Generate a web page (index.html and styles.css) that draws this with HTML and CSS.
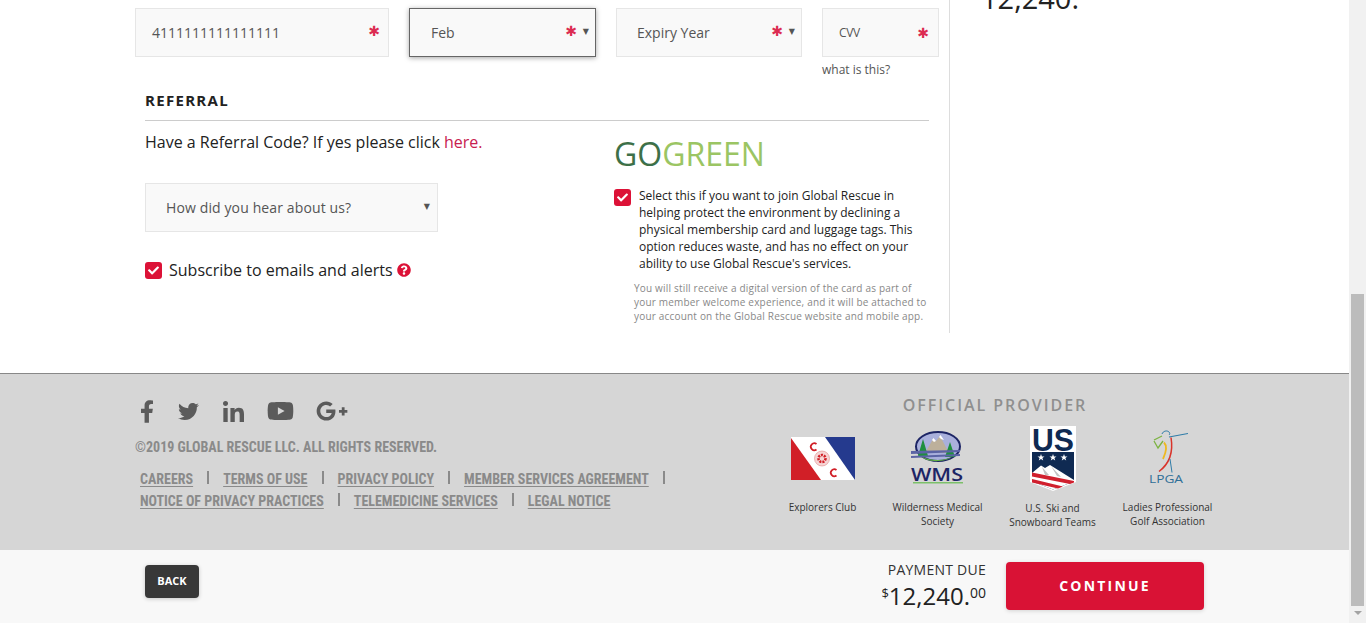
FILE: index.html
```html
<!DOCTYPE html>
<html lang="en">
<head>
<meta charset="utf-8">
<title>Payment</title>
<link rel="stylesheet" href="styles.css">
</head>
<body>
<div class="window">
  <div class="page">
    <main class="main">
      <section class="form-col">
        <div class="card-row">
          <div class="field field-card"><span class="value">4111111111111111</span><span class="star">✱</span></div>
          <div class="field field-month focused"><span class="value">Feb</span><span class="star">✱</span><span class="caret">▼</span></div>
          <div class="field field-year"><span class="value">Expiry Year</span><span class="star">✱</span><span class="caret">▼</span></div>
          <div class="cvv-wrap">
            <div class="field field-cvv"><span class="value cvv-text">CVV</span><span class="star">✱</span></div>
            <a class="what">what is this?</a>
          </div>
        </div>
        <div class="referral">
          <h2 class="section-title">REFERRAL</h2>
          <div class="referral-cols">
            <div class="ref-left">
              <p class="ref-text">Have a Referral Code? If yes please click <a class="here">here.</a></p>
              <div class="field field-hear"><span class="value">How did you hear about us?</span><span class="caret">▼</span></div>
              <div class="subscribe">
                <span class="check"><svg viewBox="0 0 512 512"><path d="M173.898 439.404l-166.4-166.4c-9.997-9.997-9.997-26.206 0-36.204l36.203-36.204c9.997-9.998 26.207-9.998 36.204 0L192 312.69 432.095 72.596c9.997-9.997 26.207-9.997 36.204 0l36.203 36.204c9.997 9.997 9.997 26.206 0 36.204l-294.4 294.401c-9.998 9.997-26.207 9.997-36.204-.001z"/></svg></span>
                <span class="sub-label">Subscribe to emails and alerts</span>
                <svg class="help" viewBox="0 0 512 512"><path d="M504 256c0 136.997-111.043 248-248 248S8 392.997 8 256C8 119.083 119.043 8 256 8s248 111.083 248 248zM262.655 90c-54.497 0-89.255 22.957-116.549 63.758-3.536 5.286-2.353 12.415 2.715 16.258l34.699 26.31c5.205 3.947 12.621 3.008 16.665-2.122 17.864-22.658 30.113-35.797 57.303-35.797 20.429 0 45.698 13.148 45.698 32.958 0 14.976-12.363 22.667-32.534 33.976C247.128 238.528 216 254.941 216 296v4c0 6.627 5.373 12 12 12h56c6.627 0 12-5.373 12-12v-1.333c0-28.462 83.186-29.647 83.186-106.667 0-58.002-60.165-102-116.531-102zM256 338c-25.365 0-46 20.635-46 46 0 25.364 20.635 46 46 46s46-20.636 46-46c0-25.365-20.635-46-46-46z"/></svg>
              </div>
            </div>
            <div class="ref-right">
              <div class="gogreen"><span class="go">GO</span><span class="green">GREEN</span></div>
              <div class="green-check">
                <span class="check"><svg viewBox="0 0 512 512"><path d="M173.898 439.404l-166.4-166.4c-9.997-9.997-9.997-26.206 0-36.204l36.203-36.204c9.997-9.998 26.207-9.998 36.204 0L192 312.69 432.095 72.596c9.997-9.997 26.207-9.997 36.204 0l36.203 36.204c9.997 9.997 9.997 26.206 0 36.204l-294.4 294.401c-9.998 9.997-26.207 9.997-36.204-.001z"/></svg></span>
                <p class="green-text">Select this if you want to join Global Rescue in helping protect the environment by declining a physical membership card and luggage tags. This option reduces waste, and has no effect on your ability to use Global Rescue's services.</p>
              </div>
              <p class="green-note">You will still receive a digital version of the card as part of your member welcome experience, and it will be attached to your account on the Global Rescue website and mobile app.</p>
            </div>
          </div>
        </div>
      </section>
      <aside class="summary"><div class="summary-total">12,240.</div></aside>
    </main>

    <footer class="footer">
      <div class="foot-left">
        <div class="social">
          <svg class="s-f" viewBox="0 0 320 512"><path d="M279.14 288l14.22-92.66h-88.91v-60.13c0-25.35 12.42-50.06 52.24-50.06h40.42V6.26S260.43 0 225.36 0c-73.22 0-121.08 44.38-121.08 124.72v70.62H22.89V288h81.39v224h100.17V288z"/></svg>
          <svg class="s-t" viewBox="0 0 512 512"><path d="M459.37 151.716c.325 4.548.325 9.097.325 13.645 0 138.72-105.583 298.558-298.558 298.558-59.452 0-114.68-17.219-161.137-47.106 8.447.974 16.568 1.299 25.34 1.299 49.055 0 94.213-16.568 130.274-44.832-46.132-.975-84.792-31.188-98.112-72.772 6.498.974 12.995 1.624 19.818 1.624 9.421 0 18.843-1.3 27.614-3.573-48.081-9.747-84.143-51.98-84.143-102.985v-1.299c13.969 7.797 30.214 12.67 47.431 13.319-28.264-18.843-46.781-51.005-46.781-87.391 0-19.492 5.197-37.36 14.294-52.954 51.655 63.675 129.3 105.258 216.365 109.807-1.624-7.797-2.599-15.918-2.599-24.04 0-57.828 46.782-104.934 104.934-104.934 30.213 0 57.502 12.67 76.67 33.137 23.715-4.548 46.456-13.32 66.599-25.34-7.798 24.366-24.366 44.833-46.132 57.827 21.117-2.273 41.584-8.122 60.426-16.243-14.292 20.791-32.161 39.308-52.628 54.253z"/></svg>
          <svg class="s-l" viewBox="0 0 448 448"><path d="M100.28 448H7.4V148.9h92.88zM53.79 108.1C24.09 108.1 0 83.5 0 53.8a53.79 53.79 0 0 1 107.58 0c0 29.7-24.1 54.3-53.79 54.3zM447.9 448h-92.68V302.4c0-34.7-.7-79.2-48.29-79.2-48.29 0-55.69 37.7-55.69 76.7V448h-92.78V148.9h89.08v40.8h1.3c12.4-23.5 42.69-48.3 87.88-48.3 94 0 111.28 61.9 111.28 142.3V448z"/></svg>
          <svg class="s-y" viewBox="0 0 576 512"><path d="M549.655 124.083c-6.281-23.65-24.787-42.276-48.284-48.597C458.781 64 288 64 288 64S117.22 64 74.629 75.486c-23.497 6.322-42.003 24.947-48.284 48.597-11.412 42.867-11.412 132.305-11.412 132.305s0 89.438 11.412 132.305c6.281 23.65 24.787 41.5 48.284 47.821C117.22 448 288 448 288 448s170.78 0 213.371-11.486c23.497-6.321 42.003-24.171 48.284-47.821 11.412-42.867 11.412-132.305 11.412-132.305s0-89.438-11.412-132.305zm-317.51 213.508V175.185l142.739 81.205-142.739 81.201z"/></svg>
          <svg class="s-g" viewBox="0 0 640 512"><path d="M386.061 228.496c1.834 9.692 3.143 19.384 3.143 31.956C389.204 370.205 315.599 448 204.8 448c-106.084 0-192-85.915-192-192s85.916-192 192-192c51.864 0 95.083 18.859 128.611 50.292l-52.126 50.03c-14.145-13.621-39.028-29.599-76.485-29.599-65.484 0-118.92 54.221-118.92 121.277 0 67.056 53.436 121.277 118.92 121.277 75.961 0 104.513-54.745 108.965-82.773H204.8v-66.009h181.261zm185.406 6.437V179.2h-56.001v55.733h-55.733v56.001h55.733v55.733h56.001v-55.733H627.2v-56.001h-55.733z"/></svg>
        </div>
        <p class="copyright">©2019 GLOBAL RESCUE LLC. ALL RIGHTS RESERVED.</p>
        <ul class="foot-links">
          <li><a>CAREERS</a></li><li><a>TERMS OF USE</a></li><li><a>PRIVACY POLICY</a></li><li><a>MEMBER SERVICES AGREEMENT</a></li><li><a>NOTICE OF PRIVACY PRACTICES</a></li><li><a>TELEMEDICINE SERVICES</a></li><li class="last"><a>LEGAL NOTICE</a></li>
        </ul>
      </div>
      <div class="providers">
        <h3 class="prov-title">OFFICIAL PROVIDER</h3>
        <div class="prov-row">
          <figure class="prov">
            <div class="prov-logo">
              <svg class="logo-ec" viewBox="0 0 64 43">
                <rect width="64" height="43" fill="#fff"/>
                <polygon points="0,1 30,43 0,43" fill="#d11f27"/>
                <polygon points="34,0 64,0 64,43" fill="#253a8e"/>
                <circle cx="31" cy="21.500" r="7.500" fill="#f6d5d5" stroke="#e08a8a" stroke-width=".6"/>
                <circle cx="31" cy="21.500" r="3.500" fill="none" stroke="#d11f27" stroke-width="2.600" stroke-dasharray="2 1"/>
                <path d="M25.500 7a3.500 3.500 0 1 0 0 5.500M45.500 33a3.500 3.500 0 1 0 0 5.500" fill="none" stroke="#d11f27" stroke-width="1.700"/>
              </svg>
            </div>
            <figcaption>Explorers Club</figcaption>
          </figure>
          <figure class="prov">
            <div class="prov-logo">
              <svg class="logo-wms" viewBox="0 0 56 55">
                <ellipse cx="28" cy="15.500" rx="22" ry="14.500" fill="#a9b0dc" stroke="#1d2565" stroke-width="2"/>
                <path d="M15 22L23 8l3 2 4-5 9 17z" fill="#bdb09b"/>
                <path d="M22 9l1.500-2 2.500 3-2 1zM29 6l1.500-2 3.500 5-3-1z" fill="#fff"/>
                <path d="M13 8l-5 17h10zM40 11l-5 15h10z" fill="#1f8f3f"/>
                <path d="M1 20l49-1v2L1 23zM1 25l49-2v2L1 27z" fill="#5b64a5"/>
                <path d="M12 26c10 4 22 4 30 0-6 5-24 6-30 0z" fill="#63b445"/>
                <text class="wms-text" x="27" y="50" text-anchor="middle" textLength="52" lengthAdjust="spacingAndGlyphs">WMS</text>
                <rect x="3" y="51" width="50" height="1.500" fill="#7cc06a"/>
              </svg>
            </div>
            <figcaption>Wilderness Medical Society</figcaption>
          </figure>
          <figure class="prov prov-us">
            <div class="prov-logo">
              <svg class="logo-us" viewBox="0 0 46 65">
                <path d="M0 0H46V56L23 65L0 56Z" fill="#fff"/>
                <path d="M2 26H44V55.500L23 63.500L2 55.500Z" fill="#0f2a52"/>
                <text class="us-text" x="23" y="24.500" text-anchor="middle" textLength="42" lengthAdjust="spacingAndGlyphs">US</text>
                <path class="us-star" d="M11 28l.9 2.400h2.600l-2.100 1.600.8 2.500-2.200-1.500-2.200 1.500.8-2.500-2.100-1.600h2.600zM23 28l.9 2.400h2.600l-2.100 1.600.8 2.500-2.200-1.500-2.200 1.500.8-2.500-2.100-1.600h2.600zM34 28l.9 2.400h2.600l-2.100 1.600.8 2.500-2.200-1.500-2.200 1.500.8-2.500-2.100-1.600h2.600z"/>
                <path d="M2 47L11 39.500L15 42L20 39L44 54V55.500L23 63.500L2 55.500Z" fill="#fff"/>
                <path d="M12 41l7 8h-4zM21 40l10 11-4-1z" fill="#c3c3c3"/>
                <path d="M2 46.500L44 55V56.500L40 58L2 50.500ZM2 53L33 60.500L28 62.500L2 56.500Z" fill="#d0202e"/>
              </svg>
            </div>
            <figcaption>U.S. Ski and Snowboard Teams</figcaption>
          </figure>
          <figure class="prov">
            <div class="prov-logo">
              <svg class="logo-lpga" viewBox="0 0 40 58">
                <path d="M21 8l19-3.500" stroke="#2f7ca8" stroke-width="1.200" fill="none"/>
                <path d="M14 5c1-3 5-4 7-2 1 1 1 2 0 3" stroke="#2f7ca8" stroke-width="1" fill="none"/>
                <path d="M6 11l8-4M6 12l4 7 5-7" stroke="#7cb342" stroke-width="1.300" fill="none"/>
                <path d="M23 8.500c2 12 0 25-12 34" stroke="#d9342b" stroke-width="1.500" fill="none"/>
                <path d="M16 13.500c4 4 2 10-1 16.500" stroke="#eeb820" stroke-width="1.800" fill="none"/>
                <path d="M22 30l2 13.500" stroke="#2f7ca8" stroke-width="1" fill="none"/>
                <text class="lpga-text" x="18" y="54" text-anchor="middle" textLength="34" lengthAdjust="spacingAndGlyphs">LPGA</text>
              </svg>
            </div>
            <figcaption>Ladies Professional Golf Association</figcaption>
          </figure>
        </div>
      </div>
    </footer>

    <div class="action-bar">
      <button class="btn-back">BACK</button>
      <div class="due">
        <div class="due-label">PAYMENT DUE</div>
        <div class="due-amount"><sup>$</sup>12,240.<sup class="cents">00</sup></div>
      </div>
      <button class="btn-continue">CONTINUE</button>
    </div>
  </div>
  <div class="scrollbar"><div class="thumb"></div><div class="arrow"></div></div>
</div>
</body>
</html>
```
FILE: styles.css
```css
* { box-sizing: border-box; }
html, body { margin: 0; height: 623px; overflow: hidden; }
body { font-family: "Open Sans", "Liberation Sans", sans-serif; color: #222; background: #fff; }
p, h2, h3, ul, figure { margin: 0; padding: 0; }
.window { display: flex; height: 623px; }
.page { width: 1349px; display: flex; flex-direction: column; }

.main { height: 373px; display: flex; }
.form-col { width: 950px; height: 333px; padding: 8px 0 0 135px; border-right: 1px solid #ddd; }
.card-row { display: flex; gap: 20px; height: 73px; }
.field { height: 49px; background: #f9f9f9; border: 1px solid #e6e6e6; display: flex; align-items: center; position: relative; font-size: 14px; color: #555; }
.value { line-height: 20px; }
.field-card { width: 254px; padding-left: 16px; }
.field-month { width: 187px; padding-left: 21px; }
.field-year { width: 186px; padding-left: 20px; }
.cvv-wrap { width: 117px; }
.field-cvv { width: 117px; padding-left: 16px; padding-top: 1px; }
.cvv-text { font-size: 12px; letter-spacing: -.3px; }
.field.focused { border-color: #666; box-shadow: 0 1px 5px rgba(0,0,0,.35); }
.star { position: absolute; right: 8px; top: 12px; color: #dc2c52; font-size: 14px; line-height: 20px; font-family: "DejaVu Sans", sans-serif; }
.field-month .star, .field-year .star { right: 18px; }
.field-cvv .star { top: 14px; right: 9px; }
.caret { position: absolute; right: 6px; top: 17px; font-size: 8px; line-height: 12px; color: #555; font-family: "DejaVu Sans", sans-serif; }
.what { display: block; font-size: 12px; line-height: 16px; margin-top: 5px; color: #555; }

.referral { margin-left: 10px; width: 784px; }
.section-title { font-size: 15px; line-height: 20px; font-weight: 700; letter-spacing: 1.3px; color: #222; padding: 9px 0 10px; border-bottom: 1px solid #ccc; }
.referral-cols { display: flex; }
.ref-left { width: 469px; }
.ref-text { font-size: 16px; line-height: 22px; margin-top: 10px; }
.here { color: #c8204f; }
.field-hear { width: 293px; margin-top: 30px; padding-left: 20px; letter-spacing: .12px; }
.field-hear .caret { right: 7px; }
.subscribe { display: flex; align-items: center; margin-top: 29px; font-size: 16px; height: 18px; }
.check { width: 17px; height: 17px; background: #dc1237; border-radius: 3px; display: flex; align-items: center; justify-content: center; flex: none; }
.check svg { width: 11px; height: 11px; fill: #fff; }
.sub-label { margin-left: 7px; }
.help { width: 14px; height: 14px; margin-left: 4px; fill: #dc1237; }
.ref-right { width: 315px; }
.gogreen { font-size: 32px; line-height: 44px; margin-top: 11px; }
.go { color: #3d7048; }
.green { color: #9bc563; }
.green-check { display: flex; margin-top: 11px; }
.green-check .check { margin-top: 2px; }
.green-text { font-size: 12px; line-height: 17px; margin-left: 8px; width: 296px; color: #222; }
.green-note { font-size: 10px; line-height: 14px; color: #888; margin: 9px 0 0 20px; width: 300px; letter-spacing: .19px; }
.summary { flex: 1; }
.summary-total { font-size: 29px; line-height: 38px; margin: -21px 0 0 31px; color: #222; }

.footer { height: 177px; background: #d6d6d6; border-top: 1px solid #888; display: flex; padding-left: 135px; }
.foot-left { width: 640px; }
.social { display: flex; align-items: center; height: 24px; margin-top: 25px; fill: #5b5b5b; }
.s-f { width: 14px; height: 23px; margin-left: 5px; margin-right: 24px; }
.s-t { width: 21px; height: 21px; margin-right: 24px; }
.s-l { width: 21px; height: 21px; margin-right: 23px; }
.s-y { width: 27px; height: 24px; margin-right: 22px; }
.s-g { width: 32px; height: 26px; }
.copyright { font-family: Roboto, "Liberation Sans", sans-serif; font-stretch: condensed; font-weight: 700; font-size: 14px; line-height: 20px; color: #8a8a8a; margin-top: 14px; }
.foot-links { list-style: none; margin-top: 11px; display: flex; flex-wrap: wrap; width: 555px; padding-left: 5px; }
.foot-links li { height: 22px; line-height: 22px; font-family: Roboto, "Liberation Sans", sans-serif; font-stretch: condensed; font-weight: 700; font-size: 14px; color: #8a8a8a; padding-right: 16px; margin-right: 14px; position: relative; }
.foot-links li::after { content: ""; position: absolute; right: 0; top: 3px; width: 2px; height: 13px; background: #8a8a8a; }
.foot-links li.last::after { display: none; }
.foot-links a { text-decoration: underline; text-underline-offset: 2px; }

.providers { width: 460px; margin-left: -10px; text-align: center; }
.prov-title { font-size: 16px; line-height: 22px; font-weight: 600; letter-spacing: 1.95px; color: #8f8f8f; margin-top: 20px; }
.prov-row { display: flex; margin-top: 9px; }
.prov { width: 115px; }
.prov-logo { height: 66px; display: flex; align-items: center; justify-content: center; }
.prov figcaption { font-size: 10px; line-height: 14px; color: #333; margin-top: 9px; padding: 0 10px; }
.prov-us figcaption { padding-top: 1px; }
.logo-ec { width: 64px; height: 43px; }
.logo-wms { width: 56px; height: 55px; }
.logo-us { width: 46px; height: 65px; overflow: visible; }
.logo-lpga { width: 40px; height: 58px; }
.wms-text { font-family: "Open Sans", sans-serif; font-size: 18px; font-weight: 600; fill: #1d2565; }
.us-text { font-family: "Liberation Sans", sans-serif; font-size: 32px; font-weight: 700; fill: #0f2a52; }
.us-star { fill: #fff; }
.lpga-text { font-family: "Open Sans", sans-serif; font-size: 11px; fill: #2f6e96; }

.action-bar { height: 73px; background: #f8f8f8; display: flex; align-items: flex-start; padding-left: 145px; }
.btn-back { width: 54px; height: 33px; margin-top: 15px; background: #383838; color: #fff; border: 0; border-radius: 4px; font-family: "Open Sans", sans-serif; font-size: 11px; font-weight: 700; box-shadow: 0 1px 4px rgba(0,0,0,.2); padding: 0 0 2px; }
.due { margin-left: auto; text-align: right; margin-top: 10px; }
.due-label { font-size: 14px; line-height: 20px; color: #333; letter-spacing: .25px; }
.due-amount { font-size: 24px; line-height: 30px; color: #222; margin-top: 1px; }
.due-amount sup { font-size: 13px; line-height: 0; vertical-align: 7px; }
.due-amount sup.cents { font-size: 14px; }
.btn-continue { width: 198px; height: 48px; margin: 12px 145px 0 20px; background: #d91235; color: #fff; border: 0; border-radius: 4px; font-family: "Open Sans", sans-serif; font-size: 14px; font-weight: 700; letter-spacing: 2.2px; box-shadow: 0 1px 4px rgba(0,0,0,.15); padding: 0 0 2px; }

.scrollbar { width: 17px; background: #f1f1f1; display: flex; flex-direction: column; padding-top: 294px; align-items: center; }
.thumb { width: 13px; height: 312px; background: #bcbcbc; }
.arrow { margin-top: 5px; border-left: 4px solid transparent; border-right: 4px solid transparent; border-top: 4px solid #a3a3a3; width: 0; height: 0; }
```
